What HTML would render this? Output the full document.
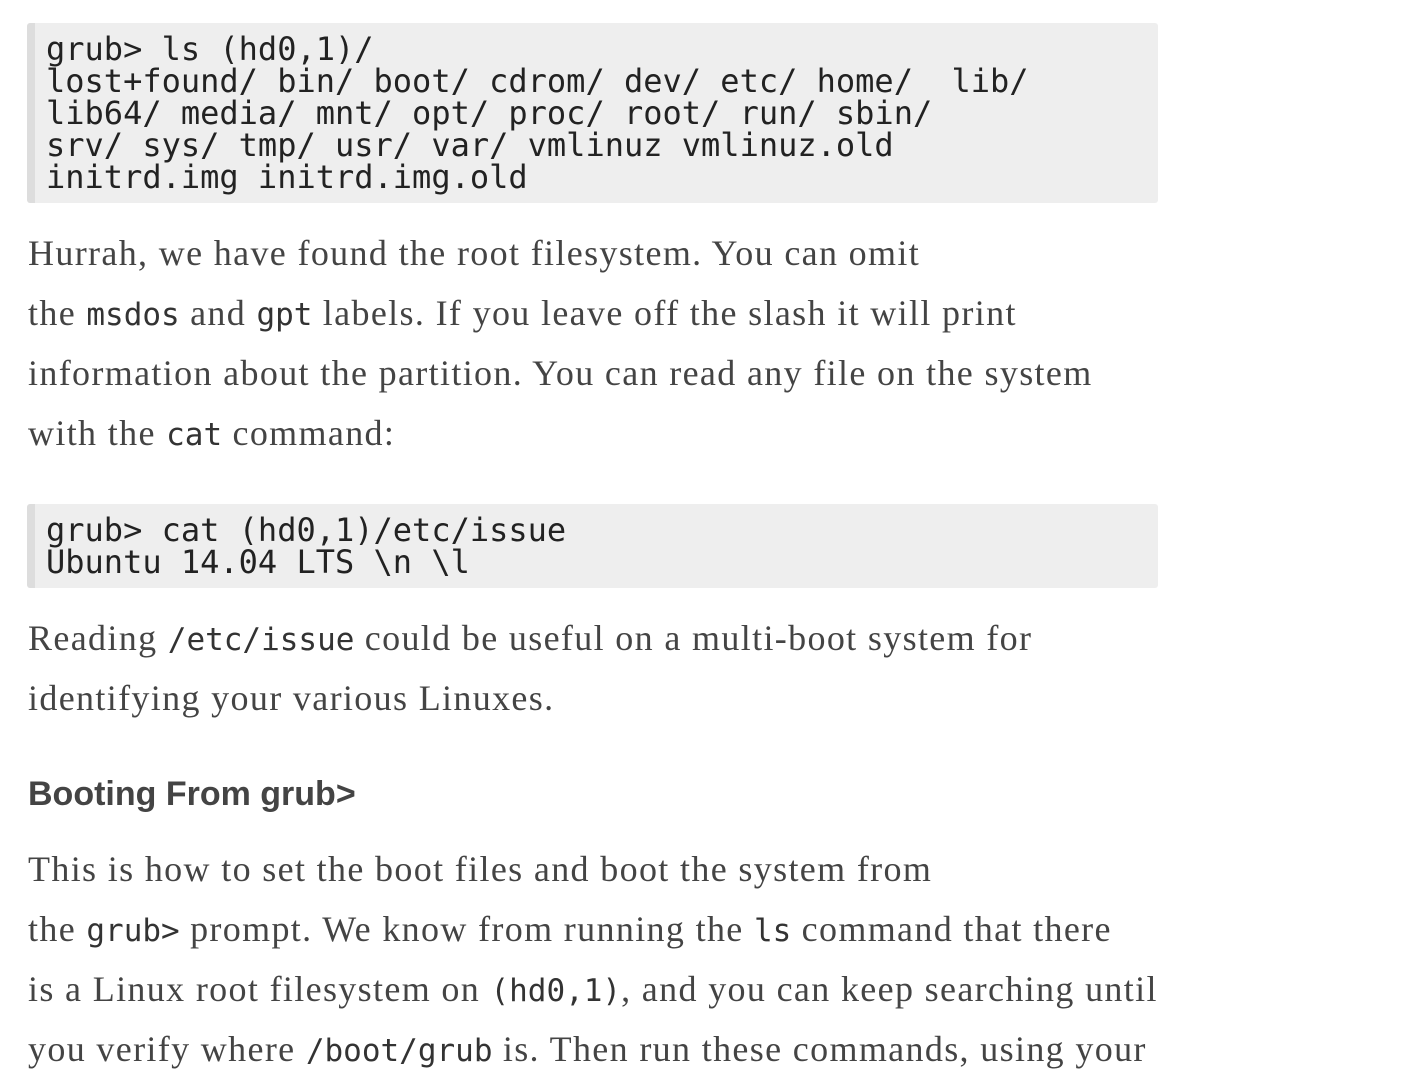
<!DOCTYPE html>
<html><head><meta charset="utf-8"><style>
body{margin:0;background:#fff;width:1420px;height:1072px;overflow:hidden;position:relative;}
.pre{position:absolute;left:27px;background:#eee;border-left:8px solid #ddd;padding:10px 0 10px 11px;box-sizing:border-box;width:1131px;border-radius:3px;font-family:"DejaVu Sans Mono",monospace;font-size:32px;line-height:32px;color:#222;white-space:pre;}
.p{position:absolute;left:28px;font-family:"Liberation Serif",serif;font-size:36px;letter-spacing:1.35px;line-height:60px;color:#444;white-space:nowrap;}
.p code{font-family:"DejaVu Sans Mono",monospace;font-size:31px;letter-spacing:0;color:#333;line-height:1;}
h3{position:absolute;left:28px;top:774px;margin:0;font-family:"Liberation Sans",sans-serif;font-weight:bold;font-size:34px;line-height:40px;color:#444;}
</style></head><body>
<div class="pre" style="top:23px;height:180px">grub&gt; ls (hd0,1)/
lost+found/ bin/ boot/ cdrom/ dev/ etc/ home/  lib/
lib64/ media/ mnt/ opt/ proc/ root/ run/ sbin/
srv/ sys/ tmp/ usr/ var/ vmlinuz vmlinuz.old
initrd.img initrd.img.old</div>
<div class="p" style="top:223px">Hurrah, we have found the root filesystem. You can omit<br>the <code>msdos</code> and <code>gpt</code> labels. If you leave off the slash it will print<br>information about the partition. You can read any file on the system<br>with the <code>cat</code> command:</div>
<div class="pre" style="top:504px;height:84px">grub&gt; cat (hd0,1)/etc/issue
Ubuntu 14.04 LTS \n \l</div>
<div class="p" style="top:608px">Reading <code>/etc/issue</code> could be useful on a multi-boot system for<br>identifying your various Linuxes.</div>
<h3>Booting From grub&gt;</h3>
<div class="p" style="top:839px">This is how to set the boot files and boot the system from<br>the <code>grub&gt;</code> prompt. We know from running the <code>ls</code> command that there<br>is a Linux root filesystem on <code>(hd0,1)</code>, and you can keep searching until<br>you verify where <code>/boot/grub</code> is. Then run these commands, using your</div>
</body></html>
